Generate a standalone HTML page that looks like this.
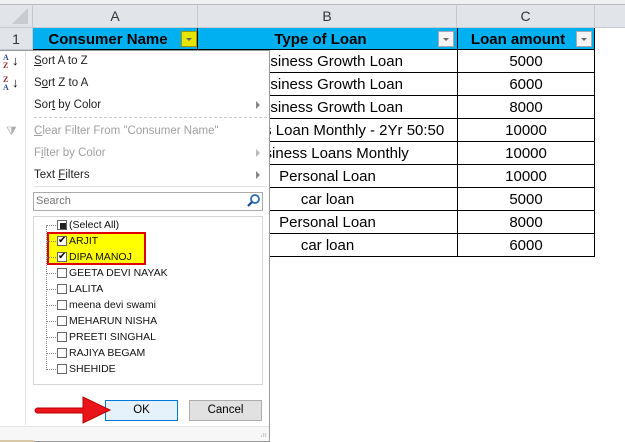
<!DOCTYPE html><html><head><style>
*{margin:0;padding:0;box-sizing:border-box}
body{width:625px;height:442px;position:relative;overflow:hidden;background:#fff;font-family:"Liberation Sans",sans-serif}
.a{position:absolute}
.hdr{background:#e1e4e8;border-right:1px solid #c6c9cd;border-bottom:1px solid #c6c9cd;color:#333;font-size:14px;text-align:center;line-height:22px}
.cell{position:absolute;border-right:1px solid #000;border-bottom:1px solid #000;font-size:15px;text-align:center;line-height:23px;color:#000;white-space:nowrap;overflow:hidden}
.dd{position:absolute;width:16px;height:16px;background:#f4f4f4;border:1px solid #aaa;top:3px}
.dd:after{content:"";position:absolute;left:4px;top:6px;border-left:3px solid transparent;border-right:3px solid transparent;border-top:3px solid #666}
.mi{position:absolute;left:34px;font-size:11.5px;color:#222}
.dis{color:#a0a0a0}
.arr{position:absolute;left:256px;border-top:4px solid transparent;border-bottom:4px solid transparent;border-left:4px solid #888}
.li{position:absolute;left:69px;font-size:10.5px;color:#111;height:14px;line-height:14px}
.cb{position:absolute;left:57px;width:10px;height:10px;border:1px solid #666;background:#fff}
.dot{position:absolute;left:46px;width:10px;border-top:1px dotted #888}
</style></head><body>
<div class="a" style="left:0;top:0;width:625px;height:5px;background:#eef0f2;border-bottom:1px solid #bbb"></div>
<div class="a hdr" style="left:0;top:5px;width:33px;height:23px"><div class="a" style="right:4px;bottom:3px;border-left:16px solid transparent;border-bottom:16px solid #c8cbcf"></div></div>
<div class="a hdr" style="left:33px;top:5px;width:165px;height:23px">A</div>
<div class="a hdr" style="left:198px;top:5px;width:259px;height:23px">B</div>
<div class="a hdr" style="left:457px;top:5px;width:138px;height:23px">C</div>
<div class="a hdr" style="left:595px;top:5px;width:30px;height:23px;border-right:none"></div>
<div class="a hdr" style="left:0;top:28px;width:33px;height:22px">1</div>
<div class="a" style="left:33px;top:28px;width:562px;height:22px;background:#00b0f0;border-bottom:1px solid #000"></div>
<div class="a" style="left:197px;top:28px;width:1px;height:229px;background:#000"></div>
<div class="a" style="left:457px;top:28px;width:1px;height:229px;background:#000"></div>
<div class="a" style="left:594px;top:28px;width:1px;height:229px;background:#000"></div>
<div class="a" style="left:33px;top:29px;width:150px;font-weight:bold;font-size:15px;text-align:center;line-height:22px">Consumer Name</div>
<div class="dd" style="left:181px;top:31px;background:#e6e600;border-color:#9a9a00"></div>
<div class="a" style="left:198px;top:29px;width:245px;font-weight:bold;font-size:15px;text-align:center;line-height:22px">Type of Loan</div>
<div class="dd" style="left:438px;top:31px"></div>
<div class="a" style="left:457px;top:29px;width:122px;font-weight:bold;font-size:15px;text-align:center;line-height:22px">Loan amount</div>
<div class="dd" style="left:576px;top:31px"></div>
<div class="cell" style="left:198px;top:50px;width:260px;height:23px">Business Growth Loan</div><div class="cell" style="left:458px;top:50px;width:137px;height:23px">5000</div>
<div class="cell" style="left:198px;top:73px;width:260px;height:23px">Business Growth Loan</div><div class="cell" style="left:458px;top:73px;width:137px;height:23px">6000</div>
<div class="cell" style="left:198px;top:96px;width:260px;height:23px">Business Growth Loan</div><div class="cell" style="left:458px;top:96px;width:137px;height:23px">8000</div>
<div class="cell" style="left:198px;top:119px;width:260px;height:23px">Business Loan Monthly - 2Yr 50:50</div><div class="cell" style="left:458px;top:119px;width:137px;height:23px">10000</div>
<div class="cell" style="left:198px;top:142px;width:260px;height:23px">Business Loans Monthly</div><div class="cell" style="left:458px;top:142px;width:137px;height:23px">10000</div>
<div class="cell" style="left:198px;top:165px;width:260px;height:23px">Personal Loan</div><div class="cell" style="left:458px;top:165px;width:137px;height:23px">10000</div>
<div class="cell" style="left:198px;top:188px;width:260px;height:23px">car loan</div><div class="cell" style="left:458px;top:188px;width:137px;height:23px">5000</div>
<div class="cell" style="left:198px;top:211px;width:260px;height:23px">Personal Loan</div><div class="cell" style="left:458px;top:211px;width:137px;height:23px">8000</div>
<div class="cell" style="left:198px;top:234px;width:260px;height:23px">car loan</div><div class="cell" style="left:458px;top:234px;width:137px;height:23px">6000</div>
<div class="a" style="left:0;top:50px;width:270px;height:392px;background:#fff;border:1px solid #999;border-left:none"></div>
<div class="a" style="left:25px;top:51px;width:1px;height:374px;background:#e2e2e2"></div>
<div class="a" style="left:3px;top:54px;font-size:8px;font-weight:bold;line-height:8px;font-family:'Liberation Serif',serif"><span style="color:#2a4c9a">A</span><br><span style="color:#9a2a2a">Z</span></div><div class="a" style="left:12px;top:53px;font-size:13px">↓</div>
<div class="a" style="left:3px;top:76px;font-size:8px;font-weight:bold;line-height:8px;font-family:'Liberation Serif',serif"><span style="color:#9a2a2a">Z</span><br><span style="color:#2a4c9a">A</span></div><div class="a" style="left:12px;top:75px;font-size:13px">↓</div>
<div class="a" style="left:6px;top:124px;font-size:12px;color:#aaa">⧩</div>
<div class="mi" style="top:55px"><u>S</u>ort A to Z</div>
<div class="mi" style="top:77px">S<u>o</u>rt Z to A</div>
<div class="mi" style="top:99px">Sor<u>t</u> by Color</div><div class="arr" style="top:101px"></div>
<div class="a" style="left:34px;top:117px;width:233px;border-top:1px dashed #ccc"></div>
<div class="mi dis" style="top:125px"><u>C</u>lear Filter From "Consumer Name"</div>
<div class="mi dis" style="top:147px">F<u>i</u>lter by Color</div><div class="arr" style="top:149px;border-left-color:#bbb"></div>
<div class="mi" style="top:169px">Text <u>F</u>ilters</div><div class="arr" style="top:171px"></div>
<div class="a" style="left:34px;top:186px;width:233px;border-top:1px solid #e0e0e0"></div>
<div class="a" style="left:33px;top:192px;width:230px;height:19px;border:1px solid #ababab"></div>
<div class="a" style="left:36px;top:195px;font-size:11px;color:#777">Search</div>
<svg class="a" style="left:247px;top:194px" width="13" height="14"><circle cx="8" cy="5" r="4" fill="none" stroke="#2a6bb5" stroke-width="1.8"/><line x1="5" y1="8" x2="1" y2="12" stroke="#1a4a8a" stroke-width="2.2"/></svg>
<div class="a" style="left:33px;top:216px;width:230px;height:169px;border:1px solid #d4d4d4"></div>
<div class="a" style="left:46px;top:226px;height:144px;border-left:1px dotted #888"></div>
<div class="a" style="left:47px;top:232px;width:99px;height:33px;background:#ffff00;border:2px solid #e00000"></div>
<div class="dot" style="top:225px"></div><div class="cb" style="top:220px"><div class="a" style="left:2px;top:2px;width:6px;height:6px;background:#222"></div></div><div class="li" style="top:218px">(Select All)</div>
<div class="dot" style="top:241px"></div><div class="cb" style="top:236px;font-size:10px;line-height:8px;text-align:center">✔</div><div class="li" style="top:234px">ARJIT</div>
<div class="dot" style="top:257px"></div><div class="cb" style="top:252px;font-size:10px;line-height:8px;text-align:center">✔</div><div class="li" style="top:250px">DIPA MANOJ</div>
<div class="dot" style="top:273px"></div><div class="cb" style="top:268px"></div><div class="li" style="top:266px">GEETA DEVI NAYAK</div>
<div class="dot" style="top:289px"></div><div class="cb" style="top:284px"></div><div class="li" style="top:282px">LALITA</div>
<div class="dot" style="top:305px"></div><div class="cb" style="top:300px"></div><div class="li" style="top:298px">meena devi swami</div>
<div class="dot" style="top:321px"></div><div class="cb" style="top:316px"></div><div class="li" style="top:314px">MEHARUN NISHA</div>
<div class="dot" style="top:337px"></div><div class="cb" style="top:332px"></div><div class="li" style="top:330px">PREETI SINGHAL</div>
<div class="dot" style="top:353px"></div><div class="cb" style="top:348px"></div><div class="li" style="top:346px">RAJIYA BEGAM</div>
<div class="dot" style="top:369px"></div><div class="cb" style="top:364px"></div><div class="li" style="top:362px">SHEHIDE</div>
<div class="a" style="left:105px;top:400px;width:73px;height:21px;background:#e5f1fb;border:1px solid #0078d7;font-size:11.5px;text-align:center;line-height:19px">OK</div>
<div class="a" style="left:189px;top:400px;width:73px;height:21px;background:#e1e1e1;border:1px solid #adadad;font-size:11.5px;text-align:center;line-height:19px">Cancel</div>
<svg class="a" style="left:33px;top:394px" width="80" height="32"><path d="M4 14 H50 V3 L77 16 L50 29 V19 H4 Q0 16.5 4 14Z" fill="#e8141a"/><path d="M4 14 H50 V3 L77 16 L50 29 V19 H4 Q0 16.5 4 14Z" fill="none" stroke="#b00" stroke-width="1"/></svg>
<div class="a" style="left:0;top:426px;width:269px;height:1px;background:#e4e4e4"></div>
<div class="a" style="left:0;top:427px;width:269px;height:14px;background:#f7f7f7"></div>
<div class="a" style="left:258px;top:431px;font-size:7px;color:#999;letter-spacing:-1px">⠠⠶</div>
<div class="a" style="left:0;top:440px;width:34px;height:2px;background:#d8c8a8"></div>
</body></html>
